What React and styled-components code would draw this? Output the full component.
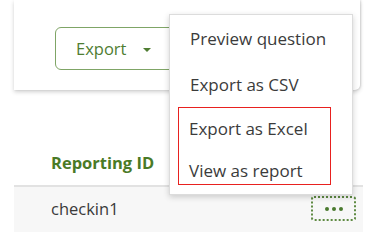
import React from 'react';
import styled, { createGlobalStyle } from 'styled-components';

const GlobalStyle = createGlobalStyle`
  body {
    margin: 0;
    background: #ffffff;
    font-family: 'Open Sans', 'Noto Sans', sans-serif;
  }
`;

const Page = styled.div`
  position: relative;
  width: 381px;
  height: 242px;
  overflow: hidden;
  background: #ffffff;
`;

const Toolbar = styled.div`
  display: flex;
  align-items: flex-start;
  margin-left: 14px;
  width: 346px;
  height: 90px;
  padding: 27px 0 0 41px;
  box-sizing: border-box;
  background: #ffffff;
  border-bottom-right-radius: 5px;
  box-shadow: 0 2px 4px rgba(0, 0, 0, 0.18), 1px 0 2px rgba(0, 0, 0, 0.12);
`;

const ExportButton = styled.button`
  display: flex;
  align-items: center;
  gap: 17px;
  height: 43px;
  width: 130px;
  padding: 0 0 0 20px;
  box-sizing: border-box;
  border: 1.5px solid #7fa566;
  border-radius: 6px;
  background: #ffffff;
  color: #4f7d32;
  font-family: inherit;
  font-size: 16.5px;
`;

const Caret = styled.span`
  width: 0;
  height: 0;
  border-left: 4px solid transparent;
  border-right: 4px solid transparent;
  border-top: 4px solid #4f7d32;
  margin-top: 2px;
`;

const Table = styled.div`
  margin: 50px 0 0 14px;
  width: 349px;
`;

const HeaderRow = styled.div`
  display: flex;
  align-items: center;
  height: 45px;
  padding-left: 37px;
  border-bottom: 2px solid #e2e2e2;
  color: #4a7a26;
  font-weight: 700;
  font-size: 16.5px;
`;

const DataRow = styled.div`
  display: flex;
  align-items: center;
  justify-content: space-between;
  height: 45px;
  padding: 0 7px 2px 37px;
  box-sizing: border-box;
  background: #f7f7f7;
  color: #3a3a3a;
  font-size: 16.5px;
`;

const MoreButton = styled.div`
  display: flex;
  align-items: center;
  justify-content: center;
  gap: 3px;
  width: 45px;
  height: 25px;
  box-sizing: border-box;
  border: 2px dotted #5e8a42;
  border-radius: 3px;
`;

const Dot = styled.span`
  width: 4px;
  height: 4px;
  border-radius: 50%;
  background: #4a7a2f;
`;

const Menu = styled.div`
  position: absolute;
  left: 169px;
  top: 14px;
  width: 184px;
  padding: 0 0 9px;
  box-sizing: border-box;
  background: #ffffff;
  border: 1px solid #dcdcdc;
  box-shadow: 0 2px 6px rgba(0, 0, 0, 0.18);
  color: #3b3b3b;
  font-size: 17px;
`;

const MenuItem = styled.div`
  display: flex;
  align-items: center;
  height: 46px;
  padding-left: 20px;
`;

const Highlight = styled.div`
  margin: 0 21px 0 8px;
  border: 1.5px solid #e8211f;
`;

const GroupItem = styled.div`
  line-height: 20px;
  padding: 11px 0 ${(p) => (p.$last ? '3px' : '11px')} 10px;
`;

const App = () => (
  <Page>
    <GlobalStyle />
    <Toolbar>
      <ExportButton>
        Export
        <Caret />
      </ExportButton>
    </Toolbar>
    <Table>
      <HeaderRow>Reporting ID</HeaderRow>
      <DataRow>
        checkin1
        <MoreButton>
          <Dot />
          <Dot />
          <Dot />
        </MoreButton>
      </DataRow>
    </Table>
    <Menu>
      <MenuItem>Preview question</MenuItem>
      <MenuItem>Export as CSV</MenuItem>
      <Highlight>
        <GroupItem>Export as Excel</GroupItem>
        <GroupItem $last>View as report</GroupItem>
      </Highlight>
    </Menu>
  </Page>
);

export default App;
